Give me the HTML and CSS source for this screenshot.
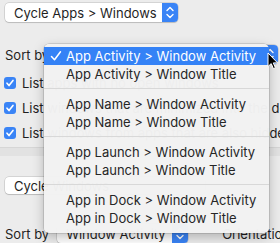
FILE: index.html
```html
<!DOCTYPE html>
<html>
<head>
    <meta charset="utf-8">
    <title>Switcher preferences</title>
    <link rel="stylesheet" href="styles.css">
</head>
<body>
    <div class="pane">
        <section class="group group-top">
            <div class="popup popup-mode">
                <span class="popup-label">Cycle Apps &gt; Windows</span>
                <span class="stepper">
                    <svg width="16" height="19" viewBox="0 0 16 19"><path d="M5 7.5 L8 4.5 L11 7.5 M5 11.5 L8 14.5 L11 11.5" fill="none" stroke="#fff" stroke-width="1.4" stroke-linecap="round" stroke-linejoin="round"/></svg>
                </span>
            </div>
            <div class="sort-row">
                <span class="label">Sort by</span>
                <div class="popup popup-sort">
                    <span class="popup-label">App Activity &gt; Window Activity</span>
                    <span class="stepper">
                        <svg width="16" height="19" viewBox="0 0 16 19"><path d="M5 7.5 L8 4.5 L11 7.5 M5 11.5 L8 14.5 L11 11.5" fill="none" stroke="#fff" stroke-width="1.4" stroke-linecap="round" stroke-linejoin="round"/></svg>
                    </span>
                </div>
            </div>
            <label class="check-row"><span class="check"><svg width="12" height="12" viewBox="0 0 12 12"><path d="M3 6.2 L5 8.6 L9 3.4" fill="none" stroke="#fff" stroke-width="1.6" stroke-linecap="round" stroke-linejoin="round"/></svg></span>List apps with no open windows</label>
            <label class="check-row"><span class="check"><svg width="12" height="12" viewBox="0 0 12 12"><path d="M3 6.2 L5 8.6 L9 3.4" fill="none" stroke="#fff" stroke-width="1.6" stroke-linecap="round" stroke-linejoin="round"/></svg></span>List windows that are minimized into the dock</label>
            <label class="check-row"><span class="check"><svg width="12" height="12" viewBox="0 0 12 12"><path d="M3 6.2 L5 8.6 L9 3.4" fill="none" stroke="#fff" stroke-width="1.6" stroke-linecap="round" stroke-linejoin="round"/></svg></span>List windows from apps that are also hidden</label>
        </section>
        <div class="divider"></div>
        <section class="group group-bottom">
            <div class="popup popup-mode2">
                <span class="popup-label">Cycle Windows</span>
            </div>
            <div class="sort-row sort-row-bottom">
                <span class="label">Sort by</span>
                <div class="popup popup-small">
                    <span class="popup-label">Window Activity</span>
                    <span class="stepper">
                        <svg width="16" height="19" viewBox="0 0 16 19"><path d="M5 7.5 L8 4.5 L11 7.5 M5 11.5 L8 14.5 L11 11.5" fill="none" stroke="#fff" stroke-width="1.4" stroke-linecap="round" stroke-linejoin="round"/></svg>
                    </span>
                </div>
                <span class="label orient">Orientation</span>
            </div>
        </section>

        <div class="menu">
            <div class="menu-item selected">
                <svg class="tick" width="12" height="12" viewBox="0 0 12 12"><path d="M1.5 6.5 L4.5 9.8 L10.5 1.8" fill="none" stroke="#fff" stroke-width="1.5" stroke-linecap="round" stroke-linejoin="round"/></svg>
                App Activity &gt; Window Activity
            </div>
            <div class="menu-item">App Activity &gt; Window Title</div>
            <div class="menu-sep"></div>
            <div class="menu-item">App Name &gt; Window Activity</div>
            <div class="menu-item">App Name &gt; Window Title</div>
            <div class="menu-sep"></div>
            <div class="menu-item">App Launch &gt; Window Activity</div>
            <div class="menu-item">App Launch &gt; Window Title</div>
            <div class="menu-sep"></div>
            <div class="menu-item">App in Dock &gt; Window Activity</div>
            <div class="menu-item">App in Dock &gt; Window Title</div>
        </div>

        <svg class="cursor" width="12" height="18" viewBox="0 0 12 18"><path d="M1 1 L1 14.5 L4.2 11.6 L6.4 16.6 L8.4 15.7 L6.3 10.9 L10.6 10.9 Z" fill="#000" stroke="#fff" stroke-width="1" stroke-linejoin="round"/></svg>
    </div>
</body>
</html>
```

FILE: styles.css
```css
body {
    margin: 0;
    background-color: #ececec;
    font-family: "Inter", "Liberation Sans", sans-serif;
    font-size: 13px;
    color: #1f1f1f;
}

.pane {
    position: relative;
    width: 280px;
    height: 243px;
    overflow: hidden;
}

.group {
    padding: 0 5px;
}

.group-top {
    padding-top: 3px;
    height: 144px;
}

.popup {
    display: flex;
    align-items: center;
    height: 19px;
    background: white;
    border-radius: 4px;
    box-shadow: 0 0 0 0.5px rgba(0, 0, 0, 0.2), 0 1px 1px rgba(0, 0, 0, 0.12);
    white-space: nowrap;
    overflow: hidden;
}

.popup-label {
    flex: 1;
    padding-left: 9px;
}

.stepper {
    width: 16px;
    height: 19px;
    background: #3a84f6;
    display: flex;
}

.popup-mode {
    width: 173px;
}

.sort-row {
    display: flex;
    align-items: center;
    margin-top: 23px;
    height: 19px;
    gap: 6px;
}

.label {
    white-space: nowrap;
}

.popup-sort {
    flex: 1;
    margin-right: -3px;
}

.check-row {
    display: flex;
    align-items: center;
    height: 25px;
    gap: 6px;
    white-space: nowrap;
    margin-left: -1px;
}

.check-row:first-of-type {
    margin-top: 6px;
}

.check {
    width: 12px;
    height: 12px;
    border-radius: 3px;
    background: #3a84f6;
    display: flex;
    flex: none;
}

.divider {
    height: 8px;
    background: #e2e2e2;
    border-top: 1px solid #d6d6d6;
}

.group-bottom {
    padding-top: 21px;
}

.popup-mode2 {
    width: 200px;
    height: 17px;
}

.sort-row-bottom {
    margin-top: 30px;
    gap: 8px;
}

.popup-small {
    width: 131px;
    flex: none;
}

.orient {
    margin-left: 26px;
}

/* open popup menu */
.menu {
    position: absolute;
    left: 44px;
    top: 44px;
    width: 225px;
    padding: 3px 0 6px;
    background: rgba(242, 242, 242, 0.98);
    border-radius: 5px;
    box-shadow: 0 0 0 0.5px rgba(0, 0, 0, 0.22), 0 4px 12px rgba(0, 0, 0, 0.25);
}

.menu-item {
    position: relative;
    height: 18px;
    line-height: 18px;
    padding-left: 22px;
    white-space: nowrap;
    color: #262626;
}

.menu-item.selected {
    background: #3482f6;
    color: white;
}

.tick {
    position: absolute;
    left: 6px;
    top: 3px;
}

.menu-sep {
    height: 1px;
    margin: 5px 0 6px;
    background: #d8d8d8;
}

.cursor {
    position: absolute;
    left: 267px;
    top: 52px;
}
```
